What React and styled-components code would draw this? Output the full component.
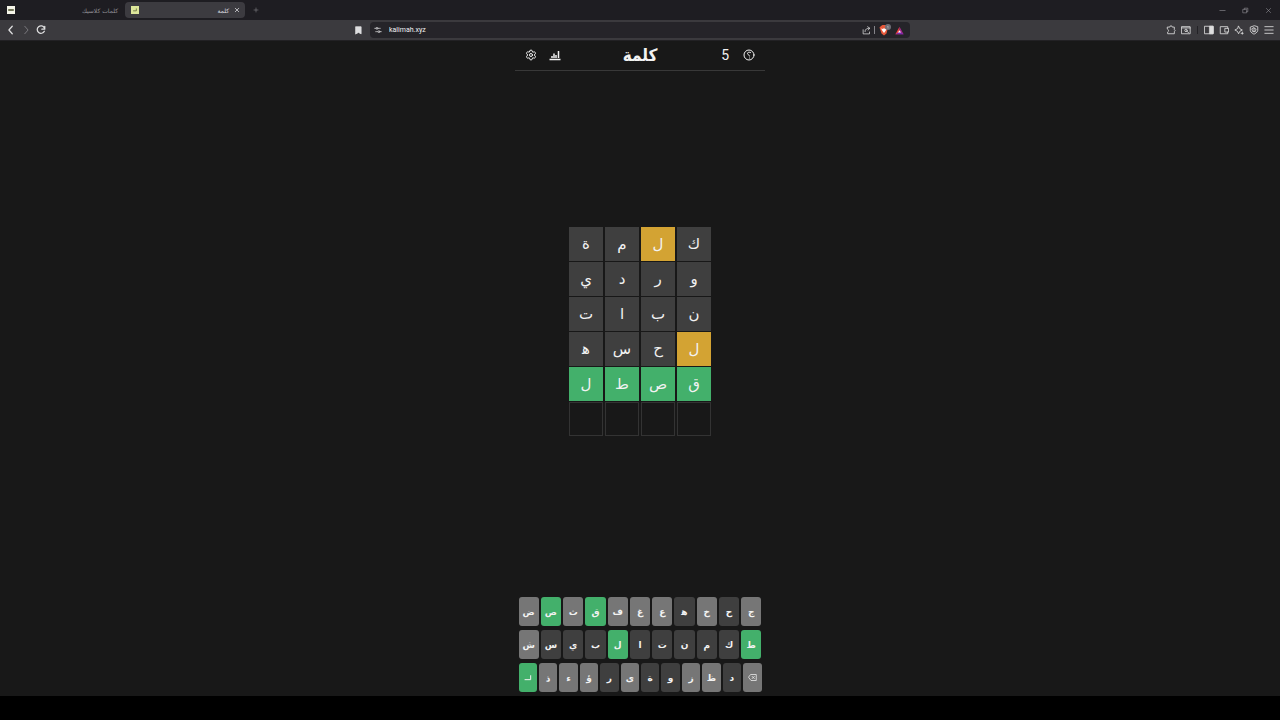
import React from 'react';
import styled, { createGlobalStyle } from 'styled-components';
import { Settings } from 'lucide-react';

const GlobalStyle = createGlobalStyle`
  * {
    box-sizing: border-box;
  }

  body {
    margin: 0;
    background: #000;
    color: #f2f2f2;
    font-family: Roboto, 'DejaVu Sans', sans-serif;
  }

  button {
    display: flex;
    align-items: center;
    justify-content: center;
    padding: 0;
    border: none;
    background: none;
    color: inherit;
    font-family: inherit;
    cursor: pointer;
  }
`;

const Page = styled.div`
  display: flex;
  flex-direction: column;
  min-height: 100vh;
  padding-bottom: 24px;
`;

const TabBar = styled.div`
  display: flex;
  align-items: center;
  height: 20px;
  background: #1e1d22;
  color: #96959b;
`;

const Tab = styled.button`
  && {
    justify-content: space-between;
    width: ${({ $active }) => ($active ? 120 : 125)}px;
    height: ${({ $active }) => ($active ? 16 : 20)}px;
    padding: 0 5px 0 6px;
    border-radius: 4px;
    background: ${({ $active }) => ($active ? '#3c3b40' : 'transparent')};
    color: ${({ $active }) => ($active ? '#dedee0' : '#929197')};
    font-family: 'DejaVu Sans', sans-serif;
    font-size: 6px;
  }
`;

const TabTitle = styled.span`
  display: flex;
  align-items: center;
  gap: 5px;
  padding-right: ${({ $inset }) => ($inset ? 2 : 0)}px;
`;

const Favicon = styled.span`
  display: flex;
  align-items: center;
  justify-content: center;
  width: 8px;
  height: 8px;
  margin-left: ${({ $wide }) => ($wide ? 1 : 0)}px;
  background: ${({ $wide }) => ($wide ? '#f5f5e9' : '#dce69a')};
  color: #464b27;
`;

const WindowButtons = styled.div`
  display: flex;
  gap: 16px;
  margin-left: auto;
  padding-right: 8px;
`;

const NewTab = styled.button`
  width: 22px;
  height: 16px;
`;

const Toolbar = styled.div`
  display: grid;
  grid-template-columns: 354fr 556px 370fr;
  align-items: center;
  height: 21px;
  border-bottom: 1px solid #222124;
  background: #3b3a3e;
  color: #dededf;
`;

const Tools = styled.div`
  display: flex;
  align-items: center;
  justify-content: ${({ $end }) => ($end ? 'flex-end' : 'flex-start')};
  gap: 5px;
  padding: 0 6px;

  button:disabled {
    color: #858489;
  }
`;

const Divider = styled.span`
  width: 1px;
  height: 8px;
  margin: 0 ${({ $wide }) => ($wide ? 1 : 0)}px;
  background: ${({ $wide }) => ($wide ? '#232226' : '#85848a')};
`;

const AddressRow = styled.div`
  display: flex;
  align-items: center;
  gap: 7px;
`;

const AddressBox = styled.div`
  display: flex;
  flex: 1;
  align-items: center;
  gap: 3px;
  height: 16px;
  padding: 0 6px 0 4px;
  border-radius: 4px;
  background: #252429;
`;

const Address = styled.input`
  flex: 1;
  min-width: 0;
  padding: 0 0 0 4px;
  border: none;
  outline: none;
  background: none;
  color: #f0f0f2;
  font: 7px Roboto, sans-serif;
`;

const Game = styled.main`
  display: flex;
  flex: 1;
  flex-direction: column;
  align-items: center;
  background: #181818;
`;

const Header = styled.header`
  display: grid;
  grid-template-columns: 1fr auto 1fr;
  align-items: center;
  width: 250px;
  height: 30px;
  padding: 0 10px 2px;
  border-bottom: 1px solid #383838;
`;

const HeaderGroup = styled.div`
  display: flex;
  align-items: center;
  justify-content: ${({ $end }) => ($end ? 'flex-end' : 'flex-start')};
  gap: ${({ $end }) => ($end ? 14 : 12)}px;
`;

const Title = styled.h1`
  margin: 0;
  font-family: 'DejaVu Sans Condensed', 'DejaVu Sans', sans-serif;
  font-size: 17px;
  line-height: 24px;
`;

const Count = styled.span`
  font-size: 14px;
  line-height: 16px;
`;

const BoardArea = styled.div`
  display: flex;
  flex: 1;
  align-items: center;
  padding-bottom: 5px;
`;

const Board = styled.div`
  display: grid;
  grid-template-columns: repeat(4, 34px);
  gap: 1px 2px;
`;

const tileColors = {
  absent: '#3f3f3f',
  present: '#d3a333',
  correct: '#43b06b',
  unused: '#767676',
};

const Tile = styled.div`
  display: flex;
  align-items: center;
  justify-content: center;
  height: 34px;
  border: 1px solid ${({ $state }) => tileColors[$state] || '#333'};
  background: ${({ $state }) => tileColors[$state] || 'transparent'};
  font-family: 'DejaVu Sans', sans-serif;
  font-size: 15px;
`;

const Keyboard = styled.div`
  display: flex;
  flex-direction: column;
  gap: 4px;
  width: 243px;
  padding-bottom: 4px;
`;

const KeyRow = styled.div`
  display: flex;
  gap: 2px;
`;

const Key = styled.button`
  && {
    flex: 1;
    min-width: 0;
    height: 29px;
    border-radius: 3px;
    background: ${({ $state }) => tileColors[$state]};
    font-family: 'DejaVu Sans', sans-serif;
    font-size: 9px;
    font-weight: 700;
  }
`;

const Glyph = styled.svg`
  display: block;
  flex: none;
  fill: none;
  stroke: currentColor;
  stroke-width: ${({ $weight }) => $weight};
  stroke-linecap: round;
  stroke-linejoin: round;
`;

const Logo = styled.svg`
  display: block;
  flex: none;
`;

const icons = {
  back: <path d="M15 3 7 12l8 9" />,
  forward: <path d="m9 3 8 9-8 9" />,
  reload: <path d="M20 15A9 9 0 1 1 20 7M21 3v7h-7" />,
  close: <path d="m5 5 14 14M19 5 5 19" />,
  plus: <path d="M12 4v16M4 12h16" />,
  minimize: <path d="M3 12h18" />,
  restore: <path d="M4 8h12v12H4zM8 8V4h12v12h-4" />,
  bookmark: <path d="M5 2h14v19l-7-4-7 4z" fill="currentColor" />,
  tune: <path d="M2 7h5M17 17h5M12 7a3 3 0 1 0-6 0 3 3 0 0 0 6 0M18 17a3 3 0 1 0-6 0 3 3 0 0 0 6 0M12 7h7M5 17h7" />,
  share: <path d="M3 10v11h17v-5M8 15c0-7 5-9 12-9M15 2l6 4-5 5" />,
  puzzle: <path d="M4 5h5a3 3 0 0 1 6 0h5v6a3 3 0 0 1 0 5v5H4v-4a4 4 0 0 0 0-7z" />,
  search: <path d="M2 4h20v17H2zM2 7h20M15 13a3 3 0 1 0-6 0 3 3 0 0 0 6 0M14 15l4 3" />,
  sidebar: <><path d="M2 3h20v18H2z" /><path d="M14 3h8v18h-8z" fill="currentColor" /></>,
  wallet: <path d="M21 8V4H3v17h18v-4M22 8h-8v9h8z" />,
  sparkle: <path d="m11 3 3 6 6 3-6 3-3 6-3-6-6-3 6-3zM20 17v5M17 20h5" />,
  shield: <path d="M12 2 3 5v8c0 5 9 9 9 9s9-4 9-9V5zM12 7l5 3-2 6H9l-2-6zM12 7v9" />,
  menu: <path d="M2 4h20M2 12h20M2 20h20" />,
  stats: <path d="M1 21h22M6 14v4M10 9v9M14 12v6M19 4v14" strokeWidth="3" strokeLinecap="butt" />,
  help: <><circle cx="12" cy="12" r="10" /><path d="M15 7c-2-1-6-1-6 2 0 3 4 2 4 5M13 18v.1" /></>,
  erase: <path d="M8 4h14v16H8l-6-8zM11 9l6 6M17 9l-6 6" />,
  enter: <path d="M20 5v12H3" />,
};

const Icon = ({ name, size = 10, weight = 2 }) => (
  <Glyph width={size} height={size} viewBox="0 0 24 24" $weight={weight} aria-hidden="true">
    {icons[name]}
  </Glyph>
);

const IconButton = ({ name, label, size, weight, disabled }) => (
  <button aria-label={label} disabled={disabled}>
    <Icon name={name} size={size} weight={weight} />
  </button>
);

const BraveLogo = () => (
  <Logo width="14" height="14" viewBox="0 0 28 28" aria-hidden="true">
    <path d="m6 6 3-2h6l3 2 2 3-3 12-5 4-5-4L3 9z" fill="#e8583a" />
    <path d="m6 11 4 1 2-2 2 2 4-1-3 5-3 4-3-4z" fill="#fff" />
    <circle cx="20" cy="8" r="6" fill="#6f6e76" />
    <path d="m19 7 1-1v5" fill="none" stroke="#d0d0d4" />
  </Logo>
);

const RewardsLogo = () => (
  <Logo width="9" height="9" viewBox="0 0 24 24" aria-hidden="true">
    <path d="M12 2 1 22h11z" fill="#ef4136" />
    <path d="m12 2 11 20H12z" fill="#a3278f" />
    <path d="m1 22 11-7 11 7z" fill="#7a2bb0" />
    <path d="m12 11-4 6h8z" fill="#fff" />
  </Logo>
);

const guesses = [
  { letters: 'ةملك', states: ['absent', 'absent', 'present', 'absent'] },
  { letters: 'يدرو', states: ['absent', 'absent', 'absent', 'absent'] },
  { letters: 'تابن', states: ['absent', 'absent', 'absent', 'absent'] },
  { letters: 'هسحل', states: ['absent', 'absent', 'absent', 'present'] },
  { letters: 'لطصق', states: ['correct', 'correct', 'correct', 'correct'] },
  { letters: '    ', states: [] },
];

const keyRows = ['ضصثقفغعهخحج', 'شسيبلاتنمكط', 'ذءؤرىةوزظد'];
const correct = 'قصطل';
const absent = 'كمةورديناتبسحه';

const keyState = (letter) => {
  if (correct.includes(letter)) return 'correct';
  return absent.includes(letter) ? 'absent' : 'unused';
};

// the joiner gives heh its initial shape
const shape = (letter) => (letter === 'ه' ? 'ه\u200d' : letter.trim());

const App = () => (
  <>
    <GlobalStyle />
    <Page>
      <TabBar>
        <Tab>
          <Favicon $wide><Icon name="minimize" size={6} weight={6} /></Favicon>
          <TabTitle $inset><span dir="rtl">كلمات كلاسيك</span></TabTitle>
        </Tab>
        <Tab $active>
          <Favicon><Icon name="enter" size={4} weight={4} /></Favicon>
          <TabTitle><span dir="rtl">كلمة</span><Icon name="close" size={6} weight={3} /></TabTitle>
        </Tab>
        <NewTab aria-label="New tab"><Icon name="plus" size={6} /></NewTab>
        <WindowButtons>
          <IconButton name="minimize" label="Minimize" size={7} />
          <IconButton name="restore" label="Restore" size={7} />
          <IconButton name="close" label="Close" size={7} />
        </WindowButtons>
      </TabBar>
      <Toolbar>
        <Tools>
          <IconButton name="back" label="Back" weight={3} />
          <IconButton name="forward" label="Forward" disabled />
          <IconButton name="reload" label="Reload" weight={3} />
        </Tools>
        <AddressRow>
          <IconButton name="bookmark" label="Bookmark" size={9} />
          <AddressBox>
            <Icon name="tune" size={8} />
            <Address aria-label="Address" defaultValue="kalimah.xyz" />
            <IconButton name="share" label="Share" size={9} />
            <Divider />
            <BraveLogo />
            <RewardsLogo />
          </AddressBox>
        </AddressRow>
        <Tools $end>
          <IconButton name="puzzle" label="Extensions" />
          <IconButton name="search" label="Search tabs" />
          <Divider $wide />
          <IconButton name="sidebar" label="Sidebar" />
          <IconButton name="wallet" label="Wallet" />
          <IconButton name="sparkle" label="Assistant" />
          <IconButton name="shield" label="VPN" />
          <IconButton name="menu" label="Menu" />
        </Tools>
      </Toolbar>
      <Game>
        <Header>
          <HeaderGroup>
            <button aria-label="Settings"><Settings size={12} /></button>
            <IconButton name="stats" label="Statistics" size={12} />
          </HeaderGroup>
          <Title dir="rtl">كلمة</Title>
          <HeaderGroup $end>
            <Count>5</Count>
            <IconButton name="help" label="Help" size={12} />
          </HeaderGroup>
        </Header>
        <BoardArea>
          <Board>
            {guesses.map(({ letters, states }, row) => (
              [...letters].map((letter, col) => (
                <Tile key={`${row}-${col}`} $state={states[col]}>{shape(letter)}</Tile>
              ))
            ))}
          </Board>
        </BoardArea>
        <Keyboard>
          {keyRows.map((letters, row) => (
            <KeyRow key={letters}>
              {row === 2 && (
                <Key $state="correct" aria-label="Enter"><Icon name="enter" size={8} weight={3} /></Key>
              )}
              {[...letters].map((letter) => (
                <Key key={letter} $state={keyState(letter)}>{shape(letter)}</Key>
              ))}
              {row === 2 && (
                <Key $state="unused" aria-label="Erase"><Icon name="erase" size={9} /></Key>
              )}
            </KeyRow>
          ))}
        </Keyboard>
      </Game>
    </Page>
  </>
);

export default App;
